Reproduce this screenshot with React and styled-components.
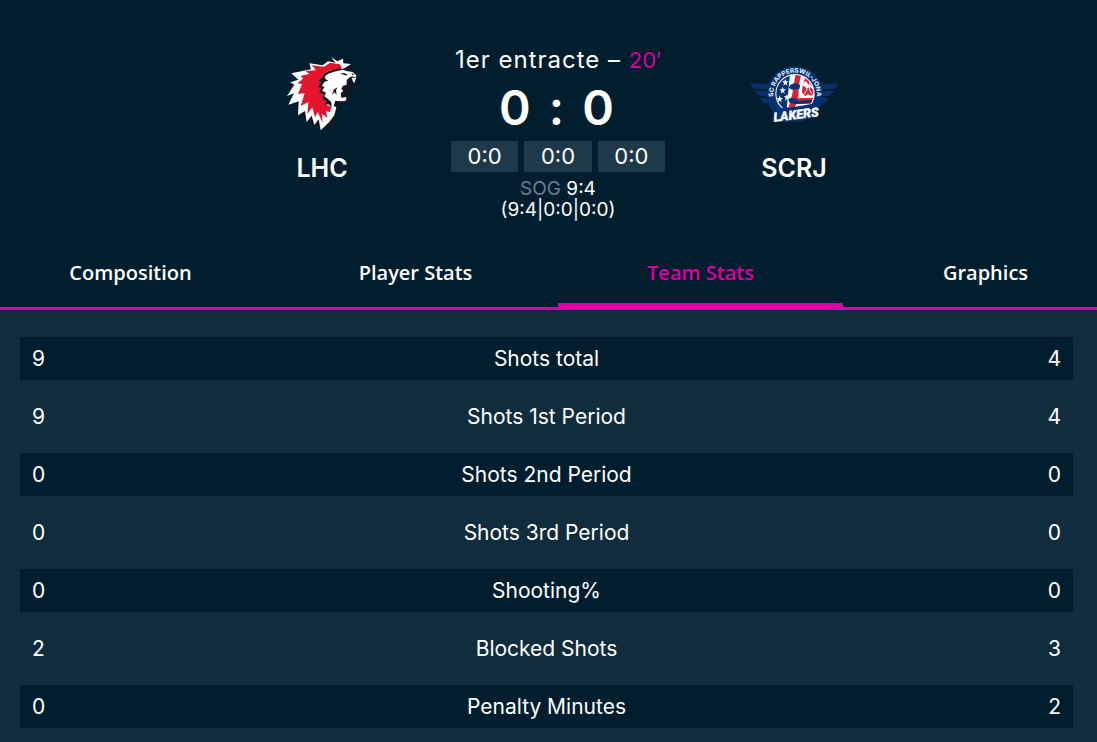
import React, { useState } from "react";
import styled, { createGlobalStyle } from "styled-components";

const navy = "#001e2e";
const slate = "#112c3d";
const pink = "#dc00a2";

const GlobalStyle = createGlobalStyle`
  * { box-sizing: border-box; }
  body {
    margin: 0;
    background: ${slate};
    color: #fff;
    font-family: Inter, "Liberation Sans", sans-serif;
  }
`;

const Page = styled.main`
  overflow-x: hidden;
`;

const Top = styled.div`
  background: ${navy};
  border-bottom: 3px solid ${pink};
`;

/* The match header and the tabs bleed past both window edges. */
const Bleed = styled.div`
  margin: 0 -31px 0 -12px;
`;

const MatchHeader = styled.header`
  display: grid;
  grid-template-columns: 236px 236px 236px;
  justify-content: center;
  padding: 45px 0 19px;
`;

const Team = styled.section`
  display: flex;
  flex-direction: column;
  align-items: center;
`;

const LogoBox = styled.div`
  display: flex;
  align-items: center;
  height: 96px;
`;

const TeamName = styled.h2`
  margin: 12px 0 0;
  font-size: 25px;
  line-height: 30px;
  font-weight: 600;
`;

const Scoreboard = styled.section`
  display: flex;
  flex-direction: column;
  align-items: center;
  white-space: nowrap;
`;

const Status = styled.p`
  margin: 0;
  font-size: 24px;
  line-height: 30px;
  letter-spacing: 1px;
`;

const Clock = styled.span`
  color: ${pink};
  font-size: 22px;
  letter-spacing: 0;
`;

const Score = styled.h1`
  margin: 0;
  font-size: 48px;
  line-height: 66px;
  font-weight: 600;
  letter-spacing: 3px;
`;

const Periods = styled.ul`
  display: flex;
  gap: 6px;
  width: 214px;
  margin: 0 0 6px;
  padding: 0;
  list-style: none;
`;

const Period = styled.li`
  flex: 1;
  background: #1f394a;
  font-size: 22px;
  line-height: 31px;
  text-align: center;
`;

const Shots = styled.p`
  margin: 0;
  font-size: 19px;
  line-height: 21px;
`;

const Muted = styled.span`
  color: #668096;
`;

const TabList = styled.div`
  display: grid;
  grid-template-columns: repeat(4, 1fr);
`;

const Tab = styled.button`
  height: 68px;
  padding: 0;
  border: 0;
  background: none;
  box-shadow: ${(p) => (p.$active ? `inset 0 -4px ${pink}` : "none")};
  color: ${(p) => (p.$active ? pink : "#fff")};
  font: 600 20px/28px "Open Sans", "Noto Sans", sans-serif;
  cursor: pointer;
`;

const Panel = styled.section`
  padding: 12px 24px 0 20px;
`;

const StatsTable = styled.table`
  width: 100%;
  margin-bottom: -15px;
  table-layout: fixed;
  border-collapse: separate;
  border-spacing: 0 15px;
  font-size: 21px;
  line-height: 43px;
`;

const Row = styled.tr`
  &:nth-child(odd) { background: ${navy}; }
`;

const Value = styled.td`
  width: 25%;
  padding: 0 12px;
  text-align: ${(p) => p.$side};
`;

const Label = styled.th`
  padding: 0;
  font-weight: 400;
`;

function LionLogo() {
  return (
    <svg width="76" height="78" viewBox="0 0 228 234" role="img" aria-label="LHC">
      <path fill="#15151c" d="M146 14 L164 24 184 20 188 34 204 38 192 50 218 60 221 78 216 92 210 80 200 78 198 100 184 128 194 134 187 145 170 146 160 160 158 186 142 207 112 230 100 206 80 206 60 180 46 190 40 150 40 100 90 50 Z" />
      <path fill="#fff" d="M141 9 L160 22 177 14 178 28 201 30 184 41 172 46 188 51 206 54 217 64 216 71 204 67 194 72 188 79 188 92 176 96 172 104 178 111 170 118 172 131 188 135 183 141 170 142 154 140 149 156 157 160 151 184 135 205 110 229 104 196 91 213 83 185 68 204 63 171 42 184 44 142 13 152 30 118 9 126 31 92 19 85 43 77 22 58 81 46 76 28 116 34 132 22 155 26 Z" />
      <path fill="#e5152d" d="M83 34 L120 38 138 26 168 31 174 43 158 46 134 50 120 59 114 70 104 80 112 84 102 97 114 101 106 114 120 120 116 134 128 140 126 152 142 158 138 174 126 172 130 192 114 179 116 206 101 174 93 190 85 160 70 180 73 144 50 156 62 118 42 120 54 90 40 88 57 74 50 65 76 60 64 51 96 49 Z" />
      <path fill="#15151c" d="M134 51 L166 43 178 46 170 49 150 53 131 60 122 68 125 76 133 80 122 83 113 96 122 99 114 110 126 116 121 127 131 134 142 145 143 159 133 151 124 152 127 140 115 135 119 121 105 115 112 102 101 98 111 85 103 80 114 70 120 59 Z" />
      <path fill="#15151c" d="M168 57 L182 58 193 64 182 64 Z M194 76 L204 84 200 108 187 126 178 128 174 119 184 109 179 101 181 96 192 91 Z M203 57 L211 61 205 63 Z M160 100 L156 110 158 122 151 115 144 122 149 107 Z" />
      <path fill="#fff" d="M203 71 L216 72 211 88 206 80 Z M174 131 L187 129 186 138 174 139 Z" />
    </svg>
  );
}

const star = "M0 -10 L3 -3 10 -3 4 2 6 10 0 5 -6 10 -4 2 -10 -3 -3 -3 Z";

function LakersLogo() {
  return (
    <svg width="100" height="80" viewBox="0 -6 300 240" role="img" aria-label="SC Rapperswil-Jona Lakers">
      <defs>
        <path id="crest-arc" d="M89 129 A65 65 0 1 1 217 129" />
        <clipPath id="crest-disc"><circle cx="153" cy="116" r="56" /></clipPath>
      </defs>
      <path fill="#08306b" d="M17 86 H82 V102 H33 Q24 97 17 86 Z M32 108 H80 V123 H47 Q38 118 32 108 Z M47 129 H82 V145 H62 Q52 140 47 129 Z M284 86 H220 V102 H268 Q278 97 284 86 Z M270 108 H222 V123 H255 Q265 118 270 108 Z M254 129 H220 V145 H240 Q249 140 254 129 Z" />
      <circle cx="153" cy="117" r="84" fill="#073272" />
      <circle cx="153" cy="116" r="59" fill="#fff" />
      <g clipPath="url(#crest-disc)">
        <path fill="#073272" d="M85 45 H139 L128 163 H85 Z" />
        <g fill="#fff">
          <path d={star} transform="translate(124 82)" />
          <path d={star} transform="translate(116 106)" />
          <path d={star} transform="translate(107 132)" />
          <path d={star} transform="translate(129 127)" />
        </g>
        <path fill="#dc2038" d="M155 55 L172 58 166 84 162 132 152 158 134 156 145 116 Z M185 65 L206 76 204 92 192 88 188 80 178 83 Z M176 91 L188 100 199 96 209 106 205 122 191 118 184 124 174 112 Z M158 130 L214 128 208 146 156 145 Z" />
        <path fill="none" stroke="#fff" strokeWidth="3" d="M183 78 L189 103 181 118 M198 82 L196 103 203 116" />
        <path fill="#073272" d="M139 90 Q153 80 169 90 L166 102 143 104 134 98 Z M133 131 Q149 125 165 137 L206 134 200 145 157 148 135 142 Z" />
      </g>
      <path fill="#073272" d="M91 160 Q151 158 220 143 L215 181 Q153 201 92 202 Z" />
      <text fill="#d8e2ee" fontFamily="Inter, sans-serif" fontWeight="800" fontSize="19">
        <textPath href="#crest-arc" startOffset="50%" textAnchor="middle">SC RAPPERSWIL-JONA</textPath>
      </text>
      <text x="156" y="192" transform="rotate(-7 156 180)" textAnchor="middle" fill="#fff" stroke="#fff" strokeWidth="1" fontFamily="Roboto, sans-serif" fontStyle="italic" fontWeight="900" fontSize="38">LAKERS</text>
    </svg>
  );
}

const tabs = ["Composition", "Player Stats", "Team Stats", "Graphics"];

const stats = [
  ["9", "Shots total", "4"],
  ["9", "Shots 1st Period", "4"],
  ["0", "Shots 2nd Period", "0"],
  ["0", "Shots 3rd Period", "0"],
  ["0", "Shooting%", "0"],
  ["2", "Blocked Shots", "3"],
  ["0", "Penalty Minutes", "2"],
];

export default function App() {
  const [active, setActive] = useState("Team Stats");
  return (
    <Page>
      <GlobalStyle />
      <Top>
        <Bleed>
          <MatchHeader>
            <Team>
              <LogoBox><LionLogo /></LogoBox>
              <TeamName>LHC</TeamName>
            </Team>
            <Scoreboard>
              <Status>1er entracte – <Clock>20′</Clock></Status>
              <Score>0 : 0</Score>
              <Periods>
                <Period>0:0</Period>
                <Period>0:0</Period>
                <Period>0:0</Period>
              </Periods>
              <Shots><Muted>SOG</Muted> 9:4</Shots>
              <Shots>(9:4|0:0|0:0)</Shots>
            </Scoreboard>
            <Team>
              <LogoBox><LakersLogo /></LogoBox>
              <TeamName>SCRJ</TeamName>
            </Team>
          </MatchHeader>
          <TabList role="tablist">
            {tabs.map((name) => (
              <Tab key={name} role="tab" aria-selected={name === active} $active={name === active} onClick={() => setActive(name)}>
                {name}
              </Tab>
            ))}
          </TabList>
        </Bleed>
      </Top>
      <Panel>
        <StatsTable>
          <tbody>
            {stats.map(([home, label, away]) => (
              <Row key={label}>
                <Value $side="left">{home}</Value>
                <Label scope="row">{label}</Label>
                <Value $side="right">{away}</Value>
              </Row>
            ))}
          </tbody>
        </StatsTable>
      </Panel>
    </Page>
  );
}
